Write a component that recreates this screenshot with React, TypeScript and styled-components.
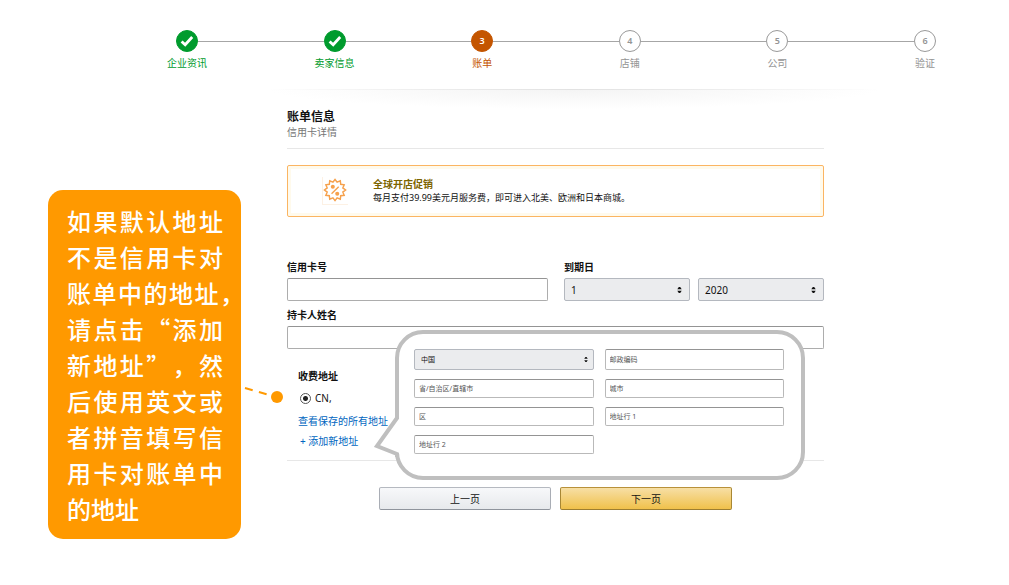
import React from "react";
import styled, { createGlobalStyle, css } from "styled-components";

const font = `"Noto Sans", "Noto Sans CJK SC", sans-serif`;
const orange = "#ff9900";
const rule = "#e7e7e7";

const GlobalStyle = createGlobalStyle`
  *, *::before, *::after { box-sizing: border-box; }
  body { margin: 0; background: #fff; color: #111; font: 10px/14px ${font}; }
  input, select, button { font-family: inherit; color: inherit; }
`;

/* ---------- progress steps ---------- */

type StepState = "done" | "current" | "todo";

const stateColor: Record<StepState, string> = {
  done: "#009b2d",
  current: "#c45500",
  todo: "#949494",
};

const Steps = styled.ol`
  display: flex;
  list-style: none;
  margin: 0;
  padding: 30px 73px 0 176px;
  height: 89px;
`;

const StepItem = styled.li<{ $state: StepState }>`
  flex: 1;
  color: ${(p) => stateColor[p.$state]};
  &:last-child {
    flex: none;
  }
`;

const Track = styled.div`
  display: flex;
  align-items: center;
`;

const Marker = styled.span<{ $state: StepState }>`
  flex: none;
  display: flex;
  align-items: center;
  justify-content: center;
  width: 22px;
  height: 22px;
  border-radius: 50%;
  border: 1px solid ${(p) => (p.$state === "todo" ? "#999" : stateColor[p.$state])};
  background: ${(p) => (p.$state === "todo" ? "#fff" : stateColor[p.$state])};
  color: ${(p) => (p.$state === "todo" ? "#949494" : "#fff")};
  font-size: 9px;
  font-weight: 600;
`;

const Connector = styled.span`
  flex: 1;
  height: 1px;
  background: #a6a6a6;
`;

const StepLabel = styled.span`
  display: flex;
  justify-content: center;
  width: 22px;
  margin-top: 4px;
  white-space: nowrap;
`;

/* ---------- page layout ---------- */

const Stage = styled.div`
  display: flex;
  align-items: flex-start;
  padding: 0 185px 32px 48px;
`;

const Main = styled.main`
  flex: 1;
  min-width: 0;
  margin-left: 46px;
`;

const Shade = styled.div`
  height: 20px;
  margin: 0 -56px 0 -20px;
  background:
    linear-gradient(90deg, transparent, #e2e2e2 50%, transparent) top / 100% 1px no-repeat,
    radial-gradient(ellipse 50% 100% at 50% 0, #f4f4f4, transparent);
`;

const Heading = styled.header`
  padding-bottom: 9px;
  border-bottom: 1px solid ${rule};
`;

const Title = styled.h1`
  margin: 0;
  font-size: 12px;
  line-height: 16px;
  font-weight: 700;
`;

const Subtitle = styled.p`
  margin: 0;
  color: #767676;
`;

/* ---------- note at the left ---------- */

const Note = styled.aside`
  position: relative;
  flex: none;
  width: 193px;
  margin-top: 101px;
  padding: 13px 18px 12px 19px;
  border-radius: 15px;
  background: ${orange};
  color: #fff;
  font: 500 24px/36px "Noto Sans CJK SC", sans-serif;
  text-spacing-trim: space-all;
`;

const NoteLine = styled.span<{ $hang?: boolean; $last?: boolean }>`
  display: block;
  margin-right: ${(p) => (p.$hang ? "-21px" : "0")};
  text-align-last: ${(p) => (p.$last ? "left" : "justify")};
  white-space: nowrap;
`;

const Lead = styled.svg`
  position: absolute;
  top: 192px;
  left: 100%;
`;

/* ---------- promotion ---------- */

const Promo = styled.section`
  display: flex;
  align-items: center;
  height: 52px;
  margin-top: 16px;
  padding-left: 34px;
  border: 1px solid #fbb562;
  border-radius: 2px;
  box-shadow: inset 0 0 0 3px #fffaec;
`;

const PromoIcon = styled.svg`
  flex: none;
  border-left: 1px solid #fdf1e4;
  border-bottom: 1px solid #fdf1e4;
`;

const PromoText = styled.div`
  margin-left: 25px;
`;

const PromoTitle = styled.h2`
  margin: 0;
  color: #7d6500;
  font-size: 10px;
  font-weight: 700;
`;

const PromoBody = styled.p`
  margin: 0;
  font-size: 9px;
  white-space: nowrap;
`;

/* ---------- form controls ---------- */

const Form = styled.form`
  margin-top: 43px;
`;

const CardRow = styled.div`
  display: grid;
  grid-template-columns: 261fr 260fr;
  gap: 16px;
  margin-bottom: 7px;
`;

const Field = styled.div`
  display: flex;
  flex-direction: column;
  gap: 4px;
`;

const Label = styled.label`
  font-weight: 700;
`;

const controlBox = css<{ $small?: boolean }>`
  display: block;
  width: 100%;
  margin: 0;
  border-radius: 2px;
  outline: 0;
  font-size: ${(p) => (p.$small ? "7px" : "10px")};
`;

const TextInput = styled.input<{ $small?: boolean }>`
  ${controlBox}
  height: ${(p) => (p.$small ? "100%" : "23px")};
  min-height: 0;
  padding: 0 4px;
  border: 1px solid ${(p) => (p.$small ? "#b9b9b9" : "#adadad")};
  border-top-color: #949494;
  background: #fff;
  &::placeholder {
    color: #555;
    opacity: 1;
  }
`;

const SelectWrap = styled.span`
  display: grid;
  align-items: center;
  & > * {
    grid-area: 1 / 1;
  }
`;

const Select = styled.select<{ $small?: boolean }>`
  ${controlBox}
  appearance: none;
  height: ${(p) => (p.$small ? "21px" : "23px")};
  padding: 0 20px 0 6px;
  border: 1px solid #b4b8bf;
  background: #ebecee;
`;

const Arrows = styled.svg<{ $small?: boolean }>`
  justify-self: end;
  margin-right: ${(p) => (p.$small ? "6px" : "8px")};
  pointer-events: none;
`;

const ExpiryRow = styled.div`
  display: grid;
  grid-template-columns: 1fr 1fr;
  gap: 8px;
`;

/* ---------- billing address ---------- */

const Address = styled.section`
  position: relative;
  padding: 20px 0 12px 11px;
  border-bottom: 1px solid ${rule};
`;

const Saved = styled.fieldset`
  min-width: 0;
  margin: 0;
  padding: 0;
  border: 0;
`;

const Legend = styled.legend`
  margin-bottom: 8px;
  padding: 0;
  font-weight: 700;
`;

const Choice = styled.label`
  display: flex;
  align-items: center;
  gap: 4px;
  margin-left: 2px;
`;

const Radio = styled.input`
  appearance: none;
  width: 11px;
  height: 11px;
  margin: 0;
  border: 1px solid #555;
  border-radius: 50%;
  background: radial-gradient(circle, #222 0 2px, #fff 3px);
`;

const Links = styled.div`
  display: flex;
  flex-direction: column;
  align-items: flex-start;
  gap: 6px;
  margin-top: 9px;
`;

const Anchor = styled.a<{ $indent?: boolean }>`
  padding-left: ${(p) => (p.$indent ? "2px" : "0")};
  color: #0066c0;
  text-decoration: none;
`;

const Balloon = styled.div`
  position: absolute;
  top: -19px;
  left: 108px;
  right: 19px;
  display: grid;
  grid-template-columns: 1fr 1fr;
  grid-template-rows: 21px 19px 19px 19px;
  gap: 9px 11px;
  padding: 15px 17px 22px 15px;
  border: 4px solid #bfbfbf;
  border-radius: 28px;
  background: #fff;
`;

const Pointer = styled.svg`
  position: absolute;
  left: -25px;
  top: 80px;
`;

/* ---------- buttons ---------- */

const Actions = styled.div`
  display: flex;
  justify-content: center;
  gap: 9px;
  margin-top: 26px;
`;

const Button = styled.button<{ $primary?: boolean }>`
  width: 172px;
  height: 23px;
  padding: 0;
  border: 1px solid;
  border-color: ${(p) => (p.$primary ? "#b8913a #a88734 #9c7e31" : "#b5b9c0 #a9adb5 #8f949c")};
  border-radius: 2px;
  background: ${(p) =>
    p.$primary ? "linear-gradient(#f7dfa5, #f0c14b)" : "linear-gradient(#f7f8fa, #e7e9ec)"};
  font-size: 10px;
`;

/* ---------- pieces ---------- */

const steps: { label: string; state: StepState }[] = [
  { label: "企业资讯", state: "done" },
  { label: "卖家信息", state: "done" },
  { label: "账单", state: "current" },
  { label: "店铺", state: "todo" },
  { label: "公司", state: "todo" },
  { label: "验证", state: "todo" },
];

const noteLines = [
  "如果默认地址",
  "不是信用卡对",
  "账单中的地址，",
  "请点击“添加",
  "新地址”，然",
  "后使用英文或",
  "者拼音填写信",
  "用卡对账单中",
  "的地址",
];

const sealPoints = Array.from({ length: 24 }, (_, i) => {
  const r = i % 2 ? 8.4 : 11;
  const a = (i * Math.PI) / 12 - Math.PI / 2;
  return `${(12.5 + r * Math.cos(a)).toFixed(2)},${(13.5 + r * Math.sin(a)).toFixed(2)}`;
}).join(" ");

function Check() {
  return (
    <svg width="14" height="12" viewBox="0 0 14 12" aria-hidden="true">
      <path d="M1.6 6.4 L5.2 9.8 L12.2 2" fill="none" stroke="#fff" strokeWidth="2.8" />
    </svg>
  );
}

function Dropdown({ id, label, value, small }: { id: string; label: string; value: string; small?: boolean }) {
  return (
    <SelectWrap>
      <Select id={id} aria-label={label} defaultValue={value} $small={small}>
        <option value={value}>{value}</option>
      </Select>
      <Arrows $small={small} width={small ? 4 : 5} height={small ? 5 : 6} viewBox="0 0 5 6" aria-hidden="true">
        <path d="M0.3 2.2 L1.8 0 H3.2 L4.7 2.2Z M0.3 3.8 L1.8 6 H3.2 L4.7 3.8Z" fill="#111" />
      </Arrows>
    </SelectWrap>
  );
}

export default function App() {
  return (
    <>
      <GlobalStyle />
      <Steps>
        {steps.map((s, i) => (
          <StepItem key={s.label} $state={s.state}>
            <Track>
              <Marker $state={s.state}>{s.state === "done" ? <Check /> : i + 1}</Marker>
              {i < steps.length - 1 && <Connector />}
            </Track>
            <StepLabel>{s.label}</StepLabel>
          </StepItem>
        ))}
      </Steps>

      <Stage>
        <Note>
          {noteLines.map((line, i) => (
            <NoteLine key={line} $hang={line.endsWith("，")} $last={i === noteLines.length - 1}>
              {line}
            </NoteLine>
          ))}
          <Lead width="44" height="24" viewBox="0 0 44 24" aria-hidden="true">
            <path d="M4 6 L30 13.6" stroke={orange} strokeWidth="2" strokeDasharray="8 6.5" />
            <circle cx="36" cy="15" r="6" fill={orange} />
          </Lead>
        </Note>

        <Main>
          <Shade />
          <Heading>
            <Title>账单信息</Title>
            <Subtitle>信用卡详情</Subtitle>
          </Heading>

          <Promo>
            <PromoIcon width="26" height="28" viewBox="0 0 26 28" aria-hidden="true">
              <polygon points={sealPoints} fill="none" stroke="#f6a14c" strokeWidth="1.5" />
              <path d="M8.9 17.4 L16.3 10" stroke="#f6a14c" strokeWidth="1.4" />
              <circle cx="10.2" cy="10.2" r="2.1" fill="#f6a14c" />
              <circle cx="14.8" cy="17.4" r="2.1" fill="#f6a14c" />
            </PromoIcon>
            <PromoText>
              <PromoTitle>全球开店促销</PromoTitle>
              <PromoBody>每月支付39.99美元月服务费，即可进入北美、欧洲和日本商城。</PromoBody>
            </PromoText>
          </Promo>

          <Form onSubmit={(e) => e.preventDefault()}>
            <CardRow>
              <Field>
                <Label htmlFor="card">信用卡号</Label>
                <TextInput id="card" type="text" />
              </Field>
              <Field>
                <Label htmlFor="month">到期日</Label>
                <ExpiryRow>
                  <Dropdown id="month" label="到期日 月" value="1" />
                  <Dropdown id="year" label="到期日 年" value="2020" />
                </ExpiryRow>
              </Field>
            </CardRow>
            <Field>
              <Label htmlFor="holder">持卡人姓名</Label>
              <TextInput id="holder" type="text" />
            </Field>

            <Address>
              <Saved>
                <Legend>收费地址</Legend>
                <Choice>
                  <Radio type="radio" name="address" defaultChecked />
                  CN,
                </Choice>
              </Saved>
              <Links>
                <Anchor href="#saved">查看保存的所有地址</Anchor>
                <Anchor href="#new" $indent>
                  + 添加新地址
                </Anchor>
              </Links>
              <Balloon>
                <Pointer width="26" height="50" viewBox="0 0 26 50" aria-hidden="true">
                  <path d="M26 3 L23 4 L3 32 L23 40 L26 40Z" fill="#fff" />
                  <path d="M23 0 V4 L3 32 L23 40 V43" fill="none" stroke="#bfbfbf" strokeWidth="4" />
                </Pointer>
                <Dropdown id="country" label="国家" value="中国" small />
                <TextInput $small type="text" aria-label="邮政编码" placeholder="邮政编码" />
                <TextInput $small type="text" aria-label="省/自治区/直辖市" placeholder="省/自治区/直辖市" />
                <TextInput $small type="text" aria-label="城市" placeholder="城市" />
                <TextInput $small type="text" aria-label="区" placeholder="区" />
                <TextInput $small type="text" aria-label="地址行 1" placeholder="地址行 1" />
                <TextInput $small type="text" aria-label="地址行 2" placeholder="地址行 2" />
              </Balloon>
            </Address>

            <Actions>
              <Button type="button">上一页</Button>
              <Button type="submit" $primary>
                下一页
              </Button>
            </Actions>
          </Form>
        </Main>
      </Stage>
    </>
  );
}
